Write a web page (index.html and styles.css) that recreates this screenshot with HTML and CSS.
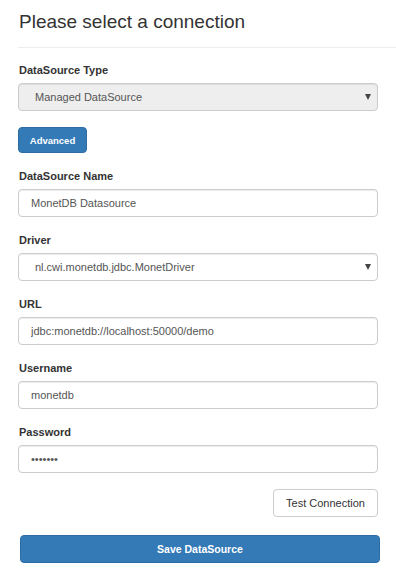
FILE: index.html
```html
<!DOCTYPE html>
<html lang="en">

<head>
    <meta charset="UTF-8">
    <meta name="viewport" content="width=device-width, initial-scale=1.0">
    <title>Select connection</title>
    <link rel="stylesheet" href="styles.css">
</head>

<body>
    <div class="page">
        <div class="header">
            <h3 class="title">Please select a connection</h3>
        </div>
        <form class="form">
            <div class="group">
                <label class="label">DataSource Type</label>
                <div class="select-wrap">
                    <select class="field select" disabled>
                        <option>Managed DataSource</option>
                    </select>
                    <svg class="caret" width="6" height="6" viewBox="0 0 6 6"><path d="M0 0 H6 L3 6 Z" fill="#444"/></svg>
                </div>
            </div>
            <button type="button" class="btn btn-advanced">Advanced</button>
            <div class="group">
                <label class="label">DataSource Name</label>
                <input class="field" type="text" value="MonetDB Datasource">
            </div>
            <div class="group">
                <label class="label">Driver</label>
                <div class="select-wrap">
                    <select class="field select">
                        <option>nl.cwi.monetdb.jdbc.MonetDriver</option>
                    </select>
                    <svg class="caret" width="6" height="6" viewBox="0 0 6 6"><path d="M0 0 H6 L3 6 Z" fill="#444"/></svg>
                </div>
            </div>
            <div class="group">
                <label class="label">URL</label>
                <input class="field" type="text" value="jdbc:monetdb://localhost:50000/demo">
            </div>
            <div class="group">
                <label class="label">Username</label>
                <input class="field" type="text" value="monetdb">
            </div>
            <div class="group">
                <label class="label">Password</label>
                <input class="field" type="password" value="monetdb">
            </div>
            <div class="test-row">
                <button type="button" class="btn btn-test">Test Connection</button>
            </div>
            <button type="button" class="btn btn-save">Save DataSource</button>
        </form>
    </div>
</body>
</html>
```

FILE: styles.css
```css
* {
    margin: 0;
    padding: 0;
    box-sizing: border-box;
}
body {
    font-family: "Liberation Sans", Arial, sans-serif;
    color: #333;
    background-color: #fff;
}
.page {
    padding: 0 18px;
}
.header {
    margin-right: -18px;
    padding: 11px 0 15px 1px;
    border-bottom: 1px solid #eee;
}
.title {
    font-size: 19px;
    font-weight: normal;
    line-height: 21px;
    color: #333;
}
.form {
    margin-top: 15px;
}
.group {
    margin-bottom: 16px;
}
.label {
    display: block;
    font-size: 11px;
    font-weight: bold;
    line-height: 15px;
    margin-bottom: 5px;
    padding-left: 1px;
}
.field {
    display: block;
    width: 100%;
    height: 28px;
    padding: 0 12px;
    font-family: "Liberation Sans", Arial, sans-serif;
    font-size: 11px;
    color: #555;
    background-color: #fff;
    border: 1px solid #ccc;
    border-radius: 4px;
    box-shadow: inset 0 1px 1px rgba(0, 0, 0, .075);
    outline: none;
}
.select-wrap {
    position: relative;
}
.select {
    appearance: none;
    -webkit-appearance: none;
    padding-left: 16px;
}
.select:disabled {
    background-color: #eee;
    color: #555;
    opacity: 1;
}
.caret {
    position: absolute;
    right: 7px;
    top: 11px;
}
.btn {
    display: block;
    font-family: "Liberation Sans", Arial, sans-serif;
    border-radius: 4px;
    cursor: pointer;
}
.btn-advanced {
    width: 69px;
    height: 26px;
    margin-bottom: 16px;
    font-size: 9.5px;
    font-weight: bold;
    color: #fff;
    background-color: #337ab7;
    border: 1px solid #2e6da4;
}
.test-row {
    display: flex;
    justify-content: flex-end;
    margin-bottom: 18px;
}
.btn-test {
    width: 105px;
    height: 28px;
    font-size: 11px;
    color: #333;
    background-color: #fff;
    border: 1px solid #ccc;
}
.btn-save {
    width: 360px;
    height: 28px;
    margin-left: 2px;
    font-size: 10.5px;
    font-weight: bold;
    color: #fff;
    background-color: #337ab7;
    border: 1px solid #2e6da4;
}
```
